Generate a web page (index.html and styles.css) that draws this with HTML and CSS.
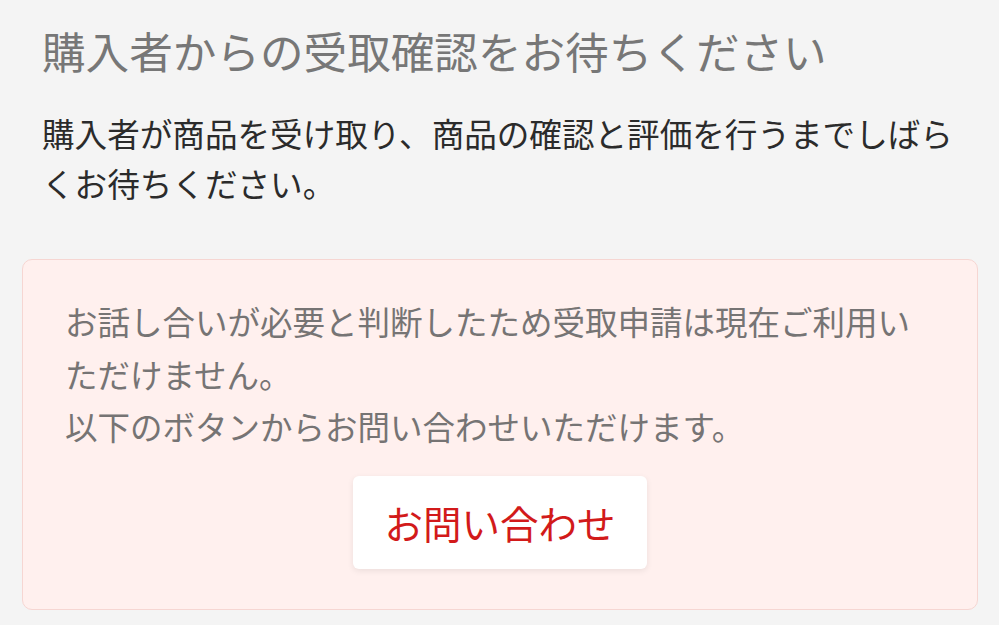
FILE: index.html
```html
<!DOCTYPE html>
<html lang="ja">
<head>
<meta charset="utf-8">
<title>受取確認</title>
<link rel="stylesheet" href="styles.css">
</head>
<body>
  <main class="page">
    <h1 class="title">購入者からの受取確認をお待ちください</h1>
    <p class="lead">購入者が商品を受け取り、商品の確認と評価を行うまでしばらくお待ちください。</p>
    <section class="notice">
      <p class="notice-text">お話し合いが必要と判断したため受取申請は現在ご利用いただけません。<br>以下のボタンからお問い合わせいただけます。</p>
      <div class="notice-actions">
        <button class="contact-btn" type="button">お問い合わせ</button>
      </div>
    </section>
  </main>
</body>
</html>
```

FILE: styles.css
```css
* { box-sizing: border-box; }

html, body {
  margin: 0;
  padding: 0;
  background: #f4f4f4;
  height: 100%;
  overflow: hidden;
}

body {
  font-family: "Noto Sans CJK JP", "Noto Sans", sans-serif;
}

.page {
  padding: 0 21px 0 22px;
}

.title {
  margin: 0;
  padding: 22px 0 0 20px;
  font-size: 43.6px;
  line-height: 56px;
  font-weight: 400;
  color: #777;
}

.lead {
  margin: 0;
  padding: 30px 0 0 20px;
  font-size: 32.6px;
  line-height: 50px;
  color: #2b2b2b;
}

.notice {
  margin-top: 51px;
  background: #fff0ee;
  border: 1.5px solid #f6d6d2;
  border-radius: 10px;
  padding: 35px 42px 40.5px 42px;
}

.notice-text {
  margin: 0;
  font-size: 32.5px;
  line-height: 52.5px;
  color: #767474;
}

.notice-actions {
  display: flex;
  justify-content: center;
  margin-top: 23px;
}

.contact-btn {
  font-family: inherit;
  font-size: 38.5px;
  color: #d21a1a;
  background: #fff;
  border: none;
  border-radius: 6px;
  width: 294px;
  height: 93px;
  padding: 0;
  box-shadow: 0 2px 6px rgba(0, 0, 0, 0.08);
}
```
